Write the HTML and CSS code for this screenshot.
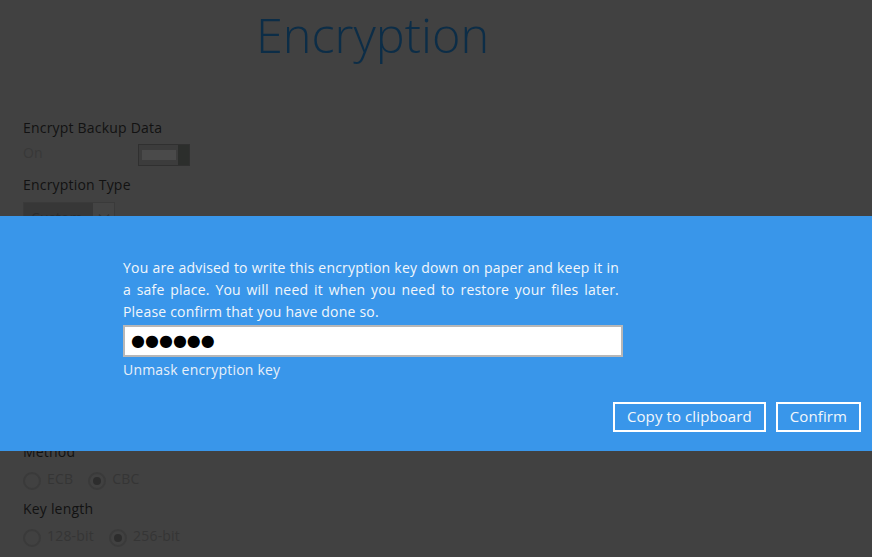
FILE: index.html
```html
<!DOCTYPE html>
<html lang="en">
<head>
    <meta charset="UTF-8">
    <meta name="viewport" content="width=device-width, initial-scale=1.0">
    <title>Encryption</title>
    <link rel="stylesheet" href="styles.css">
</head>
<body>
    <div class="page">
        <h1>Encryption</h1>

        <div class="field">
            <div class="label">Encrypt Backup Data</div>
            <div class="switch-row">
                <span class="muted">On</span>
                <span class="toggle"><span class="track"><span class="bar"></span></span><span class="knob"></span></span>
            </div>
        </div>

        <div class="field">
            <div class="label">Encryption Type</div>
            <div class="select">
                <span class="select-text">Custom</span>
                <span class="select-arrow">
                    <svg width="12" height="8" viewBox="0 0 12 8"><path d="M1 1.5 L6 6.5 L11 1.5" fill="none" stroke="#333" stroke-width="1.5"/></svg>
                </span>
            </div>
        </div>

        <!-- covered by the dialog, kept for the page flow -->
        <div class="field hidden-behind">
            <div class="label">Algorithm</div>
            <div class="radio-row">
                <span class="radio checked"></span><span class="radio-text">AES</span>
                <span class="radio"></span><span class="radio-text">Twofish</span>
                <span class="radio"></span><span class="radio-text">Triple DES</span>
            </div>
            <div class="label">Encryption key</div>
            <div class="text-box"></div>
            <div class="label">Re-enter encryption key</div>
            <div class="text-box"></div>
        </div>

        <div class="field">
            <div class="label">Method</div>
            <div class="radio-row">
                <span class="radio"></span><span class="radio-text">ECB</span>
                <span class="radio checked"></span><span class="radio-text">CBC</span>
            </div>
        </div>

        <div class="field">
            <div class="label">Key length</div>
            <div class="radio-row">
                <span class="radio"></span><span class="radio-text">128-bit</span>
                <span class="radio checked"></span><span class="radio-text">256-bit</span>
            </div>
        </div>
    </div>

    <div class="dialog">
        <div class="dialog-body">
            <p class="message">You are advised to write this encryption key down on paper and keep it in a safe place. You will need it when you need to restore your files later. Please confirm that you have done so.</p>
            <div class="key-box"><span class="dots">●●●●●●</span></div>
            <div class="unmask">Unmask encryption key</div>
        </div>
        <div class="dialog-actions">
            <button class="btn">Copy to clipboard</button>
            <button class="btn">Confirm</button>
        </div>
    </div>
</body>
</html>
```

FILE: styles.css
```css
body {
    margin: 0;
    background-color: #414141;
    font-family: 'Open Sans', 'Noto Sans', sans-serif;
    font-size: 14px;
    letter-spacing: 0.2px;
    color: #121212;
    overflow: hidden;
}
.page {
    padding: 10px 0 0 23px;
}
h1 {
    margin: 0 0 60px 233px;
    font-size: 48.6px;
    line-height: 48px;
    font-weight: 300;
    letter-spacing: 0;
    color: #0c2d47;
}
.field {
    margin-bottom: 9px;
}
.label {
    line-height: 20px;
}
.muted {
    color: #383838;
    width: 115px;
    line-height: 20px;
}
.switch-row {
    display: flex;
    align-items: flex-start;
    margin-top: 5px;
}
.toggle {
    display: flex;
    width: 52px;
    height: 22px;
    margin-top: 1px;
    background-color: #303030;
    box-sizing: border-box;
    padding: 1px;
}
.track {
    flex: 1;
    display: flex;
    align-items: center;
    justify-content: center;
    background-color: #3c3c3c;
}
.bar {
    width: 34px;
    height: 10px;
    background-color: #4a4a4a;
}
.knob {
    width: 11px;
    background-color: #2c2e2c;
}
.select {
    display: flex;
    width: 92px;
    height: 30px;
    margin-top: 7px;
    border: 1px solid #3a3a3a;
    box-sizing: border-box;
}
.select-text {
    width: 62px;
    padding-left: 7px;
    line-height: 30px;
    color: #2b2b2b;
    background-color: #373737;
}
.select-arrow {
    flex: 1;
    display: flex;
    align-items: center;
    justify-content: center;
    background-color: #444444;
}
.hidden-behind {
    margin-bottom: 20px;
    visibility: hidden;
}
.hidden-behind .label {
    margin-top: 10px;
}
.text-box {
    width: 300px;
    height: 30px;
    margin-top: 6px;
    background-color: #3a3a3a;
}
.radio-row {
    display: flex;
    align-items: flex-start;
    margin-top: 6px;
}
.radio {
    width: 18px;
    height: 18px;
    margin-top: 4px;
    border: 2px solid #3a3a3a;
    border-radius: 50%;
    box-sizing: border-box;
    display: flex;
    align-items: center;
    justify-content: center;
}
.radio.checked::after {
    content: "";
    width: 8px;
    height: 8px;
    border-radius: 50%;
    background-color: #2d2d2d;
}
.radio-text {
    margin: 0 15px 0 6px;
    line-height: 22px;
    color: #353535;
}
.dialog {
    position: absolute;
    top: 216px;
    left: 0;
    right: 0;
    height: 235px;
    box-sizing: border-box;
    padding-top: 41px;
    background-color: #3996ea;
    color: #f2f6fb;
}
.dialog-body {
    margin-left: 123px;
    width: 500px;
}
.message {
    width: 496px;
    margin: 0;
    line-height: 22px;
    text-align: justify;
}
.key-box {
    height: 32px;
    margin-top: 2px;
    border: 2px solid #b7b7b7;
    box-sizing: border-box;
    background-color: #ffffff;
    padding-left: 6px;
    display: flex;
    align-items: center;
}
.dots {
    font-family: 'DejaVu Sans', sans-serif;
    font-size: 16px;
    line-height: 20px;
    letter-spacing: 0;
    color: #000000;
}
.unmask {
    margin-top: 2px;
    line-height: 22px;
    color: #e8f0f9;
}
.dialog-actions {
    display: flex;
    justify-content: flex-end;
    gap: 10px;
    padding-right: 11px;
    margin-top: 21px;
}
.btn {
    height: 30px;
    padding: 0 12px 2px;
    border: 2px solid #ffffff;
    background: transparent;
    color: #f2f6fb;
    font-family: 'Open Sans', 'Noto Sans', sans-serif;
    font-size: 15px;
    line-height: 24px;
    letter-spacing: 0.1px;
    cursor: pointer;
}
```
